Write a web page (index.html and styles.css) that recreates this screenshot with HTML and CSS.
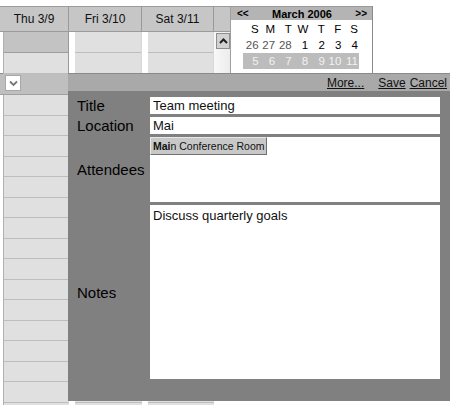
FILE: index.html
```html
<!DOCTYPE html>
<html>
<head>
    <title>Week View - Edit Event</title>
    <link rel="stylesheet" href="styles.css">
</head>
<body>
<div class="page">
    <div class="top">
        <div class="week">
            <div class="week-head">
                <div class="day-head">Thu 3/9</div>
                <div class="day-head">Fri 3/10</div>
                <div class="day-head">Sat 3/11</div>
                <div class="day-head spacer"></div>
            </div>
            <div class="week-body">
                <div class="day-col first">
                    <div class="slot sel"></div>
                    <div class="slot"></div>
                </div>
                <div class="day-col">
                    <div class="slot"></div>
                    <div class="slot"></div>
                </div>
                <div class="day-col">
                    <div class="slot"></div>
                    <div class="slot"></div>
                </div>
                <div class="scroll-col">
                    <span class="scroll-btn">
                        <svg width="11" height="8" viewBox="0 0 11 8"><polyline points="2,6 5.5,2.5 9,6" fill="none" stroke="#222" stroke-width="2"/></svg>
                    </span>
                </div>
            </div>
        </div>

        <div class="minical">
            <div class="cal-head">
                <span class="cal-nav">&lt;&lt;</span>
                <span class="cal-title">March 2006</span>
                <span class="cal-nav">&gt;&gt;</span>
            </div>
            <table class="cal-grid">
                <tr class="dow"><td>S</td><td>M</td><td>T</td><td>W</td><td>T</td><td>F</td><td>S</td></tr>
                <tr><td class="other">26</td><td class="other">27</td><td class="other">28</td><td>1</td><td>2</td><td>3</td><td>4</td></tr>
                <tr class="cur-week"><td>5</td><td>6</td><td>7</td><td>8</td><td>9</td><td>10</td><td>11</td></tr>
            </table>
        </div>
    </div>

    <div class="event-row">
        <span class="expand-box">
            <svg width="11" height="8" viewBox="0 0 11 8"><polyline points="2,2.5 5.5,6 9,2.5" fill="none" stroke="#777" stroke-width="1.8"/></svg>
        </span>
    </div>

    <div class="lower">
        <div class="slot-row"><div class="cell first"></div><div class="cell"></div><div class="cell"></div></div>
        <div class="slot-row"><div class="cell first"></div><div class="cell"></div><div class="cell"></div></div>
        <div class="slot-row"><div class="cell first"></div><div class="cell"></div><div class="cell"></div></div>
        <div class="slot-row"><div class="cell first"></div><div class="cell"></div><div class="cell"></div></div>
        <div class="slot-row"><div class="cell first"></div><div class="cell"></div><div class="cell"></div></div>
        <div class="slot-row"><div class="cell first"></div><div class="cell"></div><div class="cell"></div></div>
        <div class="slot-row"><div class="cell first"></div><div class="cell"></div><div class="cell"></div></div>
        <div class="slot-row"><div class="cell first"></div><div class="cell"></div><div class="cell"></div></div>
        <div class="slot-row"><div class="cell first"></div><div class="cell"></div><div class="cell"></div></div>
        <div class="slot-row"><div class="cell first"></div><div class="cell"></div><div class="cell"></div></div>
        <div class="slot-row"><div class="cell first"></div><div class="cell"></div><div class="cell"></div></div>
        <div class="slot-row"><div class="cell first"></div><div class="cell"></div><div class="cell"></div></div>
        <div class="slot-row"><div class="cell first"></div><div class="cell"></div><div class="cell"></div></div>
        <div class="slot-row"><div class="cell first"></div><div class="cell"></div><div class="cell"></div></div>
        <div class="slot-row"><div class="cell first"></div><div class="cell"></div><div class="cell"></div></div>
        <div class="slot-row"><div class="cell first"></div><div class="cell"></div><div class="cell"></div></div>
    </div>

    <div class="editor">
        <div class="editor-bar">
            <a href="#" class="more">More...</a>
            <a href="#">Save</a>
            <a href="#">Cancel</a>
        </div>
        <div class="editor-form">
            <label class="lbl">Title</label>
            <div class="field">Team meeting</div>

            <label class="lbl">Location</label>
            <div class="field">Mai</div>

            <label class="lbl">Attendees</label>
            <div class="field attendees">
                <span class="suggest"><b>Mai</b>n Conference Room</span>
            </div>

            <label class="lbl">Notes</label>
            <div class="field notes">Discuss quarterly goals</div>
        </div>
    </div>
</div>
</body>
</html>
```

FILE: styles.css
```css
body {
    margin: 0;
    font-family: "Liberation Sans", Arial, sans-serif;
    background: #fff;
    color: #000;
}
.page {
    position: relative;
    width: 450px;
    height: 405px;
    padding-top: 6px;
    box-sizing: border-box;
    overflow: hidden;
}

/* week grid */
.top {
    display: flex;
    height: 67px;
}
.week {
    width: 230px;
}
.week-head {
    display: grid;
    grid-template-columns: 69px 73px 72px 16px;
    height: 24px;
    background: #c6c6c6;
    border-top: 1px solid #9a9a9a;
    border-bottom: 1px solid #9a9a9a;
}
.day-head {
    border-right: 1px solid #9a9a9a;
    font-size: 12px;
    line-height: 24px;
    text-align: center;
    color: #111;
}
.day-head.spacer {
    border-right: none;
}
.week-body {
    display: grid;
    grid-template-columns: 69px 73px 72px 16px;
}
.day-col {
    padding-left: 6px;
    border-right: 1px solid #d8d8d8;
}
.day-col.first {
    padding-left: 3px;
    border-right: 1px solid #9a9a9a;
}
.slot {
    height: 20px;
    background: #e0e0e0;
    border-bottom: 1px solid #bdbdbd;
}
.day-col.first .slot {
    border-left: 1px solid #b0b0b0;
}
.slot.sel {
    background: #c3c3c3;
    border-bottom-color: #9e9e9e;
}
.scroll-col {
    background: linear-gradient(to right, #f8f8f8, #ececec);
    padding: 1px 0 0 2px;
}
.scroll-btn {
    display: flex;
    align-items: center;
    justify-content: center;
    width: 12px;
    height: 14px;
    background: #d2d2d2;
    border: 1px solid #8e8e8e;
}

/* mini calendar */
.minical {
    width: 141px;
    height: 66px;
    overflow: hidden;
    border-left: 1px solid #a0a0a0;
    border-right: 1px solid #8a8a8a;
    border-top: 1px solid #9a9a9a;
}
.cal-head {
    display: flex;
    justify-content: space-between;
    align-items: center;
    height: 13px;
    padding: 0 5px 0 6px;
    background: #b4b4b4;
    font-size: 11px;
    font-weight: bold;
}
.cal-nav {
    font-size: 10px;
}
.cal-grid {
    border-collapse: collapse;
    margin: 1px 0 0 12px;
    width: 116px;
    table-layout: fixed;
    font-size: 11.5px;
}
.cal-grid td {
    height: 16px;
    padding: 0 1px 0 0;
    text-align: right;
}
.cal-grid .other {
    color: #555;
}
.cal-grid .cur-week td {
    background: #bcbcbc;
    color: #f2f2f2;
    border-bottom: 2px solid #fff;
}

/* selected event row */
.event-row {
    height: 19px;
    border-top: 1px solid #8c8c8c;
    border-bottom: 1px solid #a0a0a0;
    background: #bfbfbf;
    padding: 1px 0 0 5px;
    box-sizing: content-box;
}
.expand-box {
    display: flex;
    align-items: center;
    justify-content: center;
    width: 14px;
    height: 14px;
    background: #fff;
    border: 1px solid #a8a8a8;
}

/* lower slots */
.slot-row {
    display: grid;
    grid-template-columns: 69px 73px 72px;
    width: 214px;
}
.cell {
    height: 19.5px;
    margin-left: 6px;
    background: #e0e0e0;
    border-bottom: 1px solid #bdbdbd;
}
.cell.first {
    margin-left: 3px;
    border-left: 1px solid #b0b0b0;
}

/* event editor */
.editor {
    position: absolute;
    left: 68px;
    top: 73px;
    width: 382px;
    height: 328px;
    background: #808080;
    border-top: 1px solid #8a8a8a;
    box-sizing: border-box;
}
.editor-bar {
    display: flex;
    justify-content: flex-end;
    align-items: center;
    gap: 4px;
    height: 17px;
    padding-right: 3px;
    background: #a9a9a9;
    font-size: 12px;
}
.editor-bar a {
    color: #111;
    text-decoration: underline;
}
.editor-bar .more {
    margin-right: 10px;
}
.editor-form {
    display: grid;
    grid-template-columns: 73px 290px;
    grid-template-rows: 17px 17px 65px 174px;
    row-gap: 3px;
    align-items: center;
    padding: 6px 10px 0 9px;
}
.lbl {
    font-size: 15px;
    color: #000;
}
.field {
    align-self: stretch;
    background: #fff;
    font-size: 13px;
    line-height: 17px;
    padding-left: 3px;
    color: #111;
}
.field.attendees {
    padding-left: 0;
}
.field.notes {
    padding-top: 2px;
}
.suggest {
    display: inline-block;
    height: 16px;
    line-height: 16px;
    padding: 0 2px;
    background: #c8c8c8;
    border: 1px solid;
    border-color: #e8e8e8 #707070 #707070 #e8e8e8;
    font-size: 10.5px;
    color: #111;
}
```
